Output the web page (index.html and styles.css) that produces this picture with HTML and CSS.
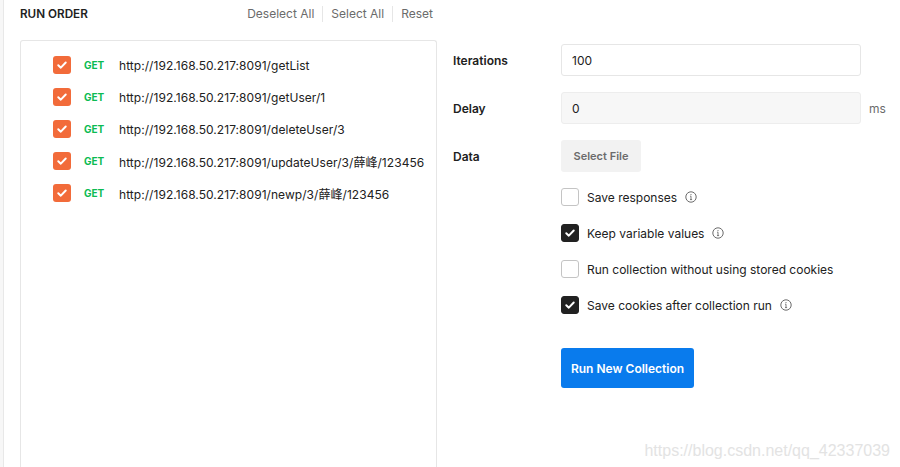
FILE: index.html
```html
<!DOCTYPE html>
<html>
<head>
<meta charset="utf-8">
<link rel="stylesheet" href="styles.css">
</head>
<body>
<div class="app">
  <div class="edge"></div>
  <div class="order">
    <div class="order-head">
      <span class="title">RUN ORDER</span>
      <div class="actions">
        <span class="act">Deselect All</span>
        <span class="sep"></span>
        <span class="act">Select All</span>
        <span class="sep"></span>
        <span class="act">Reset</span>
      </div>
    </div>
    <div class="list">
      <div class="req"><span class="cb"><svg viewBox="0 0 12 12"><path d="M2.8 6.2 L5 8.3 L9.2 3.9" fill="none" stroke="#fff" stroke-width="1.7" stroke-linecap="round" stroke-linejoin="round"/></svg></span><span class="method">GET</span><span class="url">http://192.168.50.217:8091/getList</span></div>
      <div class="req"><span class="cb"><svg viewBox="0 0 12 12"><path d="M2.8 6.2 L5 8.3 L9.2 3.9" fill="none" stroke="#fff" stroke-width="1.7" stroke-linecap="round" stroke-linejoin="round"/></svg></span><span class="method">GET</span><span class="url">http://192.168.50.217:8091/getUser/1</span></div>
      <div class="req"><span class="cb"><svg viewBox="0 0 12 12"><path d="M2.8 6.2 L5 8.3 L9.2 3.9" fill="none" stroke="#fff" stroke-width="1.7" stroke-linecap="round" stroke-linejoin="round"/></svg></span><span class="method">GET</span><span class="url">http://192.168.50.217:8091/deleteUser/3</span></div>
      <div class="req"><span class="cb"><svg viewBox="0 0 12 12"><path d="M2.8 6.2 L5 8.3 L9.2 3.9" fill="none" stroke="#fff" stroke-width="1.7" stroke-linecap="round" stroke-linejoin="round"/></svg></span><span class="method">GET</span><span class="url">http://192.168.50.217:8091/updateUser/3/薛峰/123456</span></div>
      <div class="req"><span class="cb"><svg viewBox="0 0 12 12"><path d="M2.8 6.2 L5 8.3 L9.2 3.9" fill="none" stroke="#fff" stroke-width="1.7" stroke-linecap="round" stroke-linejoin="round"/></svg></span><span class="method">GET</span><span class="url">http://192.168.50.217:8091/newp/3/薛峰/123456</span></div>
    </div>
  </div>
  <div class="settings">
    <div class="field">
      <span class="label">Iterations</span>
      <div class="input">100</div>
    </div>
    <div class="field">
      <span class="label">Delay</span>
      <div class="input disabled">0</div>
      <span class="unit">ms</span>
    </div>
    <div class="field">
      <span class="label">Data</span>
      <div class="file-btn">Select File</div>
    </div>
    <div class="options">
      <div class="opt"><span class="box"></span><span class="opt-text">Save responses</span><svg class="info" viewBox="0 0 12 12"><circle cx="6" cy="6" r="5.2" fill="none" stroke="#6b6b6b" stroke-width="1"/><path d="M6 5.2 V8.6 M5 8.6 H7.1 M5.1 5.2 H6" fill="none" stroke="#6b6b6b" stroke-width="0.9"/><circle cx="6" cy="3.6" r="0.6" fill="#6b6b6b"/></svg></div>
      <div class="opt"><span class="box on"><svg viewBox="0 0 12 12"><path d="M2.8 6.2 L5 8.3 L9.2 3.9" fill="none" stroke="#fff" stroke-width="1.7" stroke-linecap="round" stroke-linejoin="round"/></svg></span><span class="opt-text">Keep variable values</span><svg class="info" viewBox="0 0 12 12"><circle cx="6" cy="6" r="5.2" fill="none" stroke="#6b6b6b" stroke-width="1"/><path d="M6 5.2 V8.6 M5 8.6 H7.1 M5.1 5.2 H6" fill="none" stroke="#6b6b6b" stroke-width="0.9"/><circle cx="6" cy="3.6" r="0.6" fill="#6b6b6b"/></svg></div>
      <div class="opt"><span class="box"></span><span class="opt-text">Run collection without using stored cookies</span></div>
      <div class="opt"><span class="box on"><svg viewBox="0 0 12 12"><path d="M2.8 6.2 L5 8.3 L9.2 3.9" fill="none" stroke="#fff" stroke-width="1.7" stroke-linecap="round" stroke-linejoin="round"/></svg></span><span class="opt-text">Save cookies after collection run</span><svg class="info" viewBox="0 0 12 12"><circle cx="6" cy="6" r="5.2" fill="none" stroke="#6b6b6b" stroke-width="1"/><path d="M6 5.2 V8.6 M5 8.6 H7.1 M5.1 5.2 H6" fill="none" stroke="#6b6b6b" stroke-width="0.9"/><circle cx="6" cy="3.6" r="0.6" fill="#6b6b6b"/></svg></div>
    </div>
    <div class="run-btn">Run New Collection</div>
  </div>
  <div class="watermark">https://blog.csdn.net/qq_42337039</div>
</div>
</body>
</html>
```

FILE: styles.css
```css
* { box-sizing: border-box; }
html, body {
  margin: 0;
  padding: 0;
  background: #fff;
}
body {
  font-family: Inter, "Noto Sans CJK SC", sans-serif;
  color: #212121;
  width: 900px;
  height: 467px;
  overflow: hidden;
}
.app {
  position: relative;
  display: flex;
  height: 467px;
}
.edge {
  width: 4px;
  background: #f7f7f7;
  border-right: 1px solid #e8e8e8;
  flex: none;
}
.order {
  width: 433px;
  padding-left: 16px;
  display: flex;
  flex-direction: column;
  flex: none;
}
.order-head {
  height: 27px;
  display: flex;
  align-items: center;
  justify-content: space-between;
  padding-right: 4px;
  margin-bottom: 13px;
}
.title {
  font-size: 11.7px;
  font-weight: 600;
  color: #212121;
}
.actions {
  display: flex;
  align-items: center;
  font-size: 12px;
  color: #6b6b6b;
}
.sep {
  width: 1px;
  height: 16px;
  background: #e6e6e6;
  margin: 0 8px;
}
.list {
  flex: 1;
  border: 1px solid #e6e6e6;
  border-bottom: none;
  border-radius: 3px 3px 0 0;
  padding: 8px 0 0 32px;
}
.req {
  height: 32px;
  display: flex;
  align-items: center;
}
.cb {
  width: 18px;
  height: 18px;
  border-radius: 3px;
  background: #f26b3a;
  display: flex;
  align-items: center;
  justify-content: center;
  flex: none;
}
.cb svg, .box svg {
  width: 14px;
  height: 14px;
}
.method {
  margin-left: 13px;
  width: 35px;
  font-size: 10px;
  font-weight: 700;
  color: #0cbb52;
}
.url {
  font-size: 12px;
  letter-spacing: 0.05px;
  color: #212121;
}
.settings {
  padding-left: 16px;
  padding-top: 44px;
  flex: 1;
}
.field {
  height: 32px;
  display: flex;
  align-items: center;
  margin-bottom: 16px;
}
.label {
  width: 108px;
  font-size: 12px;
  font-weight: 600;
  color: #212121;
  flex: none;
}
.input {
  width: 300px;
  height: 32px;
  border: 1px solid #e6e6e6;
  border-radius: 3px;
  padding-left: 10px;
  display: flex;
  align-items: center;
  font-size: 12px;
  color: #212121;
}
.input.disabled {
  background: #f7f7f7;
  border-color: #ededed;
}
.unit {
  margin-left: 8px;
  font-size: 12px;
  color: #6b6b6b;
}
.file-btn {
  width: 80px;
  height: 32px;
  border-radius: 3px;
  background: #f2f2f2;
  display: flex;
  align-items: center;
  justify-content: center;
  font-size: 11px;
  font-weight: 600;
  color: #6b6b6b;
}
.options {
  margin-left: 108px;
  margin-top: -9px;
}
.opt {
  height: 36px;
  display: flex;
  align-items: center;
}
.box {
  width: 18px;
  height: 18px;
  border: 1px solid #c4c4c4;
  border-radius: 3px;
  display: flex;
  align-items: center;
  justify-content: center;
  flex: none;
}
.box.on {
  background: #212121;
  border-color: #212121;
}
.opt-text {
  margin-left: 8px;
  font-size: 12px;
  color: #212121;
}
.info {
  width: 12px;
  height: 12px;
  margin-left: 8px;
}
.run-btn {
  margin-left: 108px;
  margin-top: 25px;
  width: 133px;
  height: 40px;
  border-radius: 3px;
  background: #097bed;
  color: #fff;
  font-size: 12px;
  font-weight: 600;
  display: flex;
  align-items: center;
  justify-content: center;
}
.watermark {
  position: absolute;
  right: 10px;
  bottom: 7px;
  font-family: "Liberation Sans", Arial, sans-serif;
  font-size: 16px;
  color: #e3e3e3;
}
```
